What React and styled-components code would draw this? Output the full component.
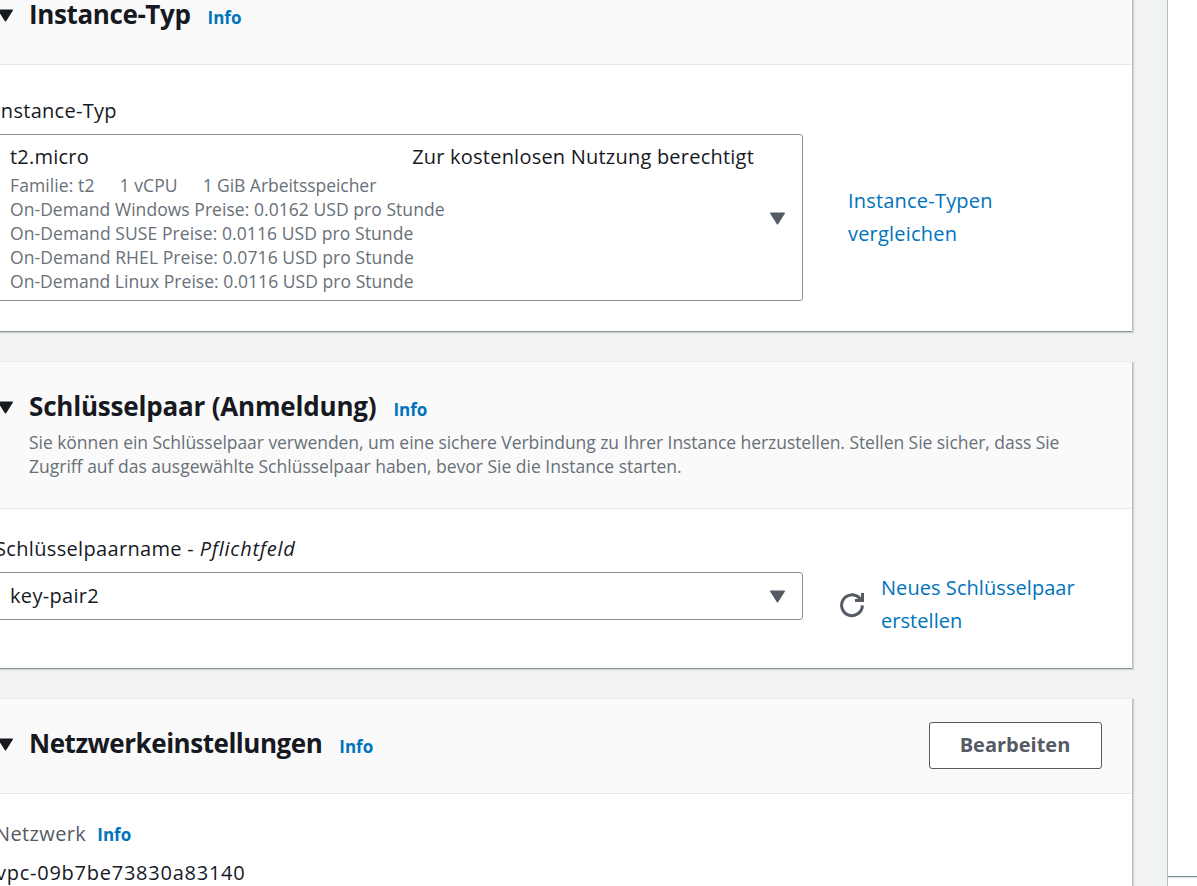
import React from "react";
import styled, { createGlobalStyle } from "styled-components";

const color = {
  page: "#f1f3f3",
  header: "#fafafa",
  line: "#e4e9e9",
  border: "#879596",
  text: "#16191f",
  muted: "#687078",
  control: "#545b64",
  link: "#0073bb",
};

const GlobalStyle = createGlobalStyle`
  *, *::before, *::after { box-sizing: border-box; }
  body {
    margin: 0;
    overflow: hidden;
    background: ${color.page};
    color: ${color.text};
    font-family: "Open Sans", "Noto Sans", sans-serif;
    font-size: 20px;
    line-height: 30px;
  }
  h2, p { margin: 0; }
`;

const Page = styled.div`
  display: flex;
  height: 886px;
  overflow: hidden;
`;

const Main = styled.main`
  display: flex;
  flex-direction: column;
  flex: none;
  gap: 31px;
  width: 1167px;
  margin-top: -30px;
  padding-right: 35px;
`;

const SidePanel = styled.aside`
  flex: 1;
  border-left: 1px solid #b9c0c1;
  background: #fff;
`;

const SummaryBox = styled.div`
  height: 877px;
  border-bottom: 1px solid #7b8f99;
  box-shadow: 0 1px 1px rgba(0, 28, 36, 0.12);
`;

const Card = styled.section`
  flex: none;
  height: ${(p) => p.$height}px;
  margin-left: -34px;
  background: #fff;
  box-shadow: 0 1px 0 #87949a, 1px 0 0 #b8bfc1, 0 -1px 0 #e8ebeb,
    1px 1px 1px 1px rgba(0, 28, 36, 0.14);
`;

const CardHeader = styled.header`
  display: flex;
  justify-content: space-between;
  align-items: flex-start;
  height: ${(p) => p.$height}px;
  padding: 23px 30px 0 31px;
  border-bottom: 1px solid ${color.line};
  background: ${color.header};
`;

const Toggle = styled.div`
  display: flex;
  align-items: flex-start;
  gap: 15px;
  padding-top: 5px;
`;

const TitleRow = styled.div`
  display: flex;
  align-items: baseline;
  gap: 17px;
  height: 33px;
`;

const Title = styled.h2`
  font-size: 26px;
  font-weight: 700;
  line-height: 33px;
  letter-spacing: ${(p) => p.$spacing}px;
`;

const InfoLink = styled.a`
  color: ${color.link};
  font-size: 17px;
  font-weight: 700;
  line-height: 24px;
`;

const Description = styled.p`
  width: 1060px;
  margin-top: 7px;
  color: ${color.muted};
  font-size: 17.5px;
  line-height: 24px;
`;

const Row = styled.span`
  display: block;
  white-space: nowrap;
  letter-spacing: ${(p) => p.$spacing || 0}px;
`;

const CardBody = styled.div`
  padding: ${(p) => p.$top}px 30px 0;
`;

const Label = styled.div`
  margin-left: -1px;
  letter-spacing: ${(p) => p.$spacing}px;
`;

const Required = styled.em`
  letter-spacing: 0.76px;
`;

const Field = styled.div`
  display: flex;
  align-items: flex-start;
  margin-top: 8px;
`;

const Select = styled.div`
  display: flex;
  align-items: center;
  justify-content: space-between;
  flex: none;
  width: 807px;
  height: ${(p) => p.$height}px;
  padding: 0 16px 0 13px;
  border: 1px solid ${color.border};
  border-radius: 3px;
  background: #fff;
`;

const Option = styled.div`
  width: 744px;
`;

const OptionHead = styled.div`
  display: flex;
  justify-content: space-between;
  letter-spacing: 0.22px;
`;

const Details = styled.div`
  margin: 1px 0;
  color: ${color.muted};
  font-size: 17.5px;
  line-height: 24px;
`;

const Specs = styled.div`
  display: flex;
  gap: 25px;
`;

const Link = styled.a`
  margin: ${(p) => p.$top || 0}px 0 0 ${(p) => p.$gap}px;
  color: ${color.link};
  line-height: 33px;
  letter-spacing: ${(p) => p.$spacing}px;
`;

const RefreshIcon = styled.svg`
  flex: none;
  width: 26px;
  height: 26px;
  margin: 20px 0 0 36px;
`;

const Button = styled.button`
  width: 173px;
  height: 47px;
  padding: 0 1px 2px 0;
  border: 1px solid ${color.control};
  border-radius: 3px;
  background: #fff;
  color: ${color.control};
  font: 700 20px/30px "Open Sans", "Noto Sans", sans-serif;
`;

const LabelRow = styled.div`
  display: flex;
  align-items: baseline;
  gap: 11px;
  margin-left: -1px;
  color: ${color.control};
  letter-spacing: 0.38px;
`;

const LabelInfo = styled(InfoLink)`
  letter-spacing: 0;
`;

const Value = styled.div`
  margin-top: 9px;
  letter-spacing: 0.75px;
`;

const CaretSvg = styled.svg`
  flex: none;
  width: 17px;
  height: 13px;
  margin-top: ${(p) => p.$top || 0}px;
`;

const Caret = ({ fill, top }) => (
  <CaretSvg $top={top} viewBox="0 0 17 13">
    <path
      d="M1.7 1.2h13.6L8.5 11.8z"
      fill={fill}
      stroke={fill}
      strokeWidth="1.4"
      strokeLinejoin="round"
    />
  </CaretSvg>
);

const Header = ({ title, spacing, height, action, children }) => (
  <CardHeader $height={height}>
    <Toggle>
      <Caret fill={color.text} top={11} />
      <div>
        <TitleRow>
          <Title $spacing={spacing}>{title}</Title>
          <InfoLink>Info</InfoLink>
        </TitleRow>
        {children}
      </div>
    </Toggle>
    {action}
  </CardHeader>
);

const prices = [
  ["Windows", "0.0162", 0.05],
  ["SUSE", "0.0116", 0.09],
  ["RHEL", "0.0716", 0.08],
  ["Linux", "0.0116", 0.04],
];

export default function App() {
  return (
    <Page>
      <GlobalStyle />
      <Main>
        <Card $height={361}>
          <Header title="Instance-Typ" spacing={-0.38} height={95} />
          <CardBody $top={31}>
            <Label $spacing={0.28}>Instance-Typ</Label>
            <Field>
              <Select $height={167}>
                <Option>
                  <OptionHead>
                    <span>t2.micro</span>
                    <span>Zur kostenlosen Nutzung berechtigt</span>
                  </OptionHead>
                  <Details>
                    <Specs>
                      <Row $spacing={0.1}>Familie: t2</Row>
                      <Row $spacing={0.08}>1 vCPU</Row>
                      <Row $spacing={-0.05}>1 GiB Arbeitsspeicher</Row>
                    </Specs>
                    {prices.map(([os, price, spacing]) => (
                      <Row key={os} $spacing={spacing}>
                        On-Demand {os} Preise: {price} USD pro Stunde
                      </Row>
                    ))}
                  </Details>
                </Option>
                <Caret fill={color.control} top={1} />
              </Select>
              <Link $gap={45} $top={50} $spacing={0.2}>
                Instance-Typen
                <br />
                vergleichen
              </Link>
            </Field>
          </CardBody>
        </Card>

        <Card $height={306}>
          <Header title="Schlüsselpaar (Anmeldung)" spacing={-0.19} height={147}>
            <Description>
              <Row $spacing={-0.05}>
                Sie können ein Schlüsselpaar verwenden, um eine sichere
                Verbindung zu Ihrer Instance herzustellen. Stellen Sie sicher,
                dass Sie
              </Row>
              <Row>
                Zugriff auf das ausgewählte Schlüsselpaar haben, bevor Sie die
                Instance starten.
              </Row>
            </Description>
          </Header>
          <CardBody $top={25}>
            <Label $spacing={0.33}>
              Schlüsselpaarname - <Required>Pflichtfeld</Required>
            </Label>
            <Field>
              <Select $height={48}>
                <Row $spacing={0.32}>key-pair2</Row>
                <Caret fill={color.control} />
              </Select>
              <RefreshIcon viewBox="0 0 26 26" fill="none">
                <path
                  d="M23.4 13.4A10.4 10.4 0 1 1 20.4 5.9L22 7.6"
                  stroke={color.control}
                  strokeWidth="3"
                />
                <path
                  d="M23.5 1v7.5H16"
                  stroke={color.control}
                  strokeWidth="3"
                />
              </RefreshIcon>
              <Link $gap={16} $top={-1} $spacing={0.06}>
                Neues Schlüsselpaar
                <br />
                erstellen
              </Link>
            </Field>
          </CardBody>
        </Card>

        <Card $height={230}>
          <Header
            title="Netzwerkeinstellungen"
            spacing={-0.47}
            height={95}
            action={<Button>Bearbeiten</Button>}
          />
          <CardBody $top={25}>
            <LabelRow>
              Netzwerk <LabelInfo>Info</LabelInfo>
            </LabelRow>
            <Value>vpc-09b7be73830a83140</Value>
          </CardBody>
        </Card>
      </Main>
      <SidePanel>
        <SummaryBox />
      </SidePanel>
    </Page>
  );
}
